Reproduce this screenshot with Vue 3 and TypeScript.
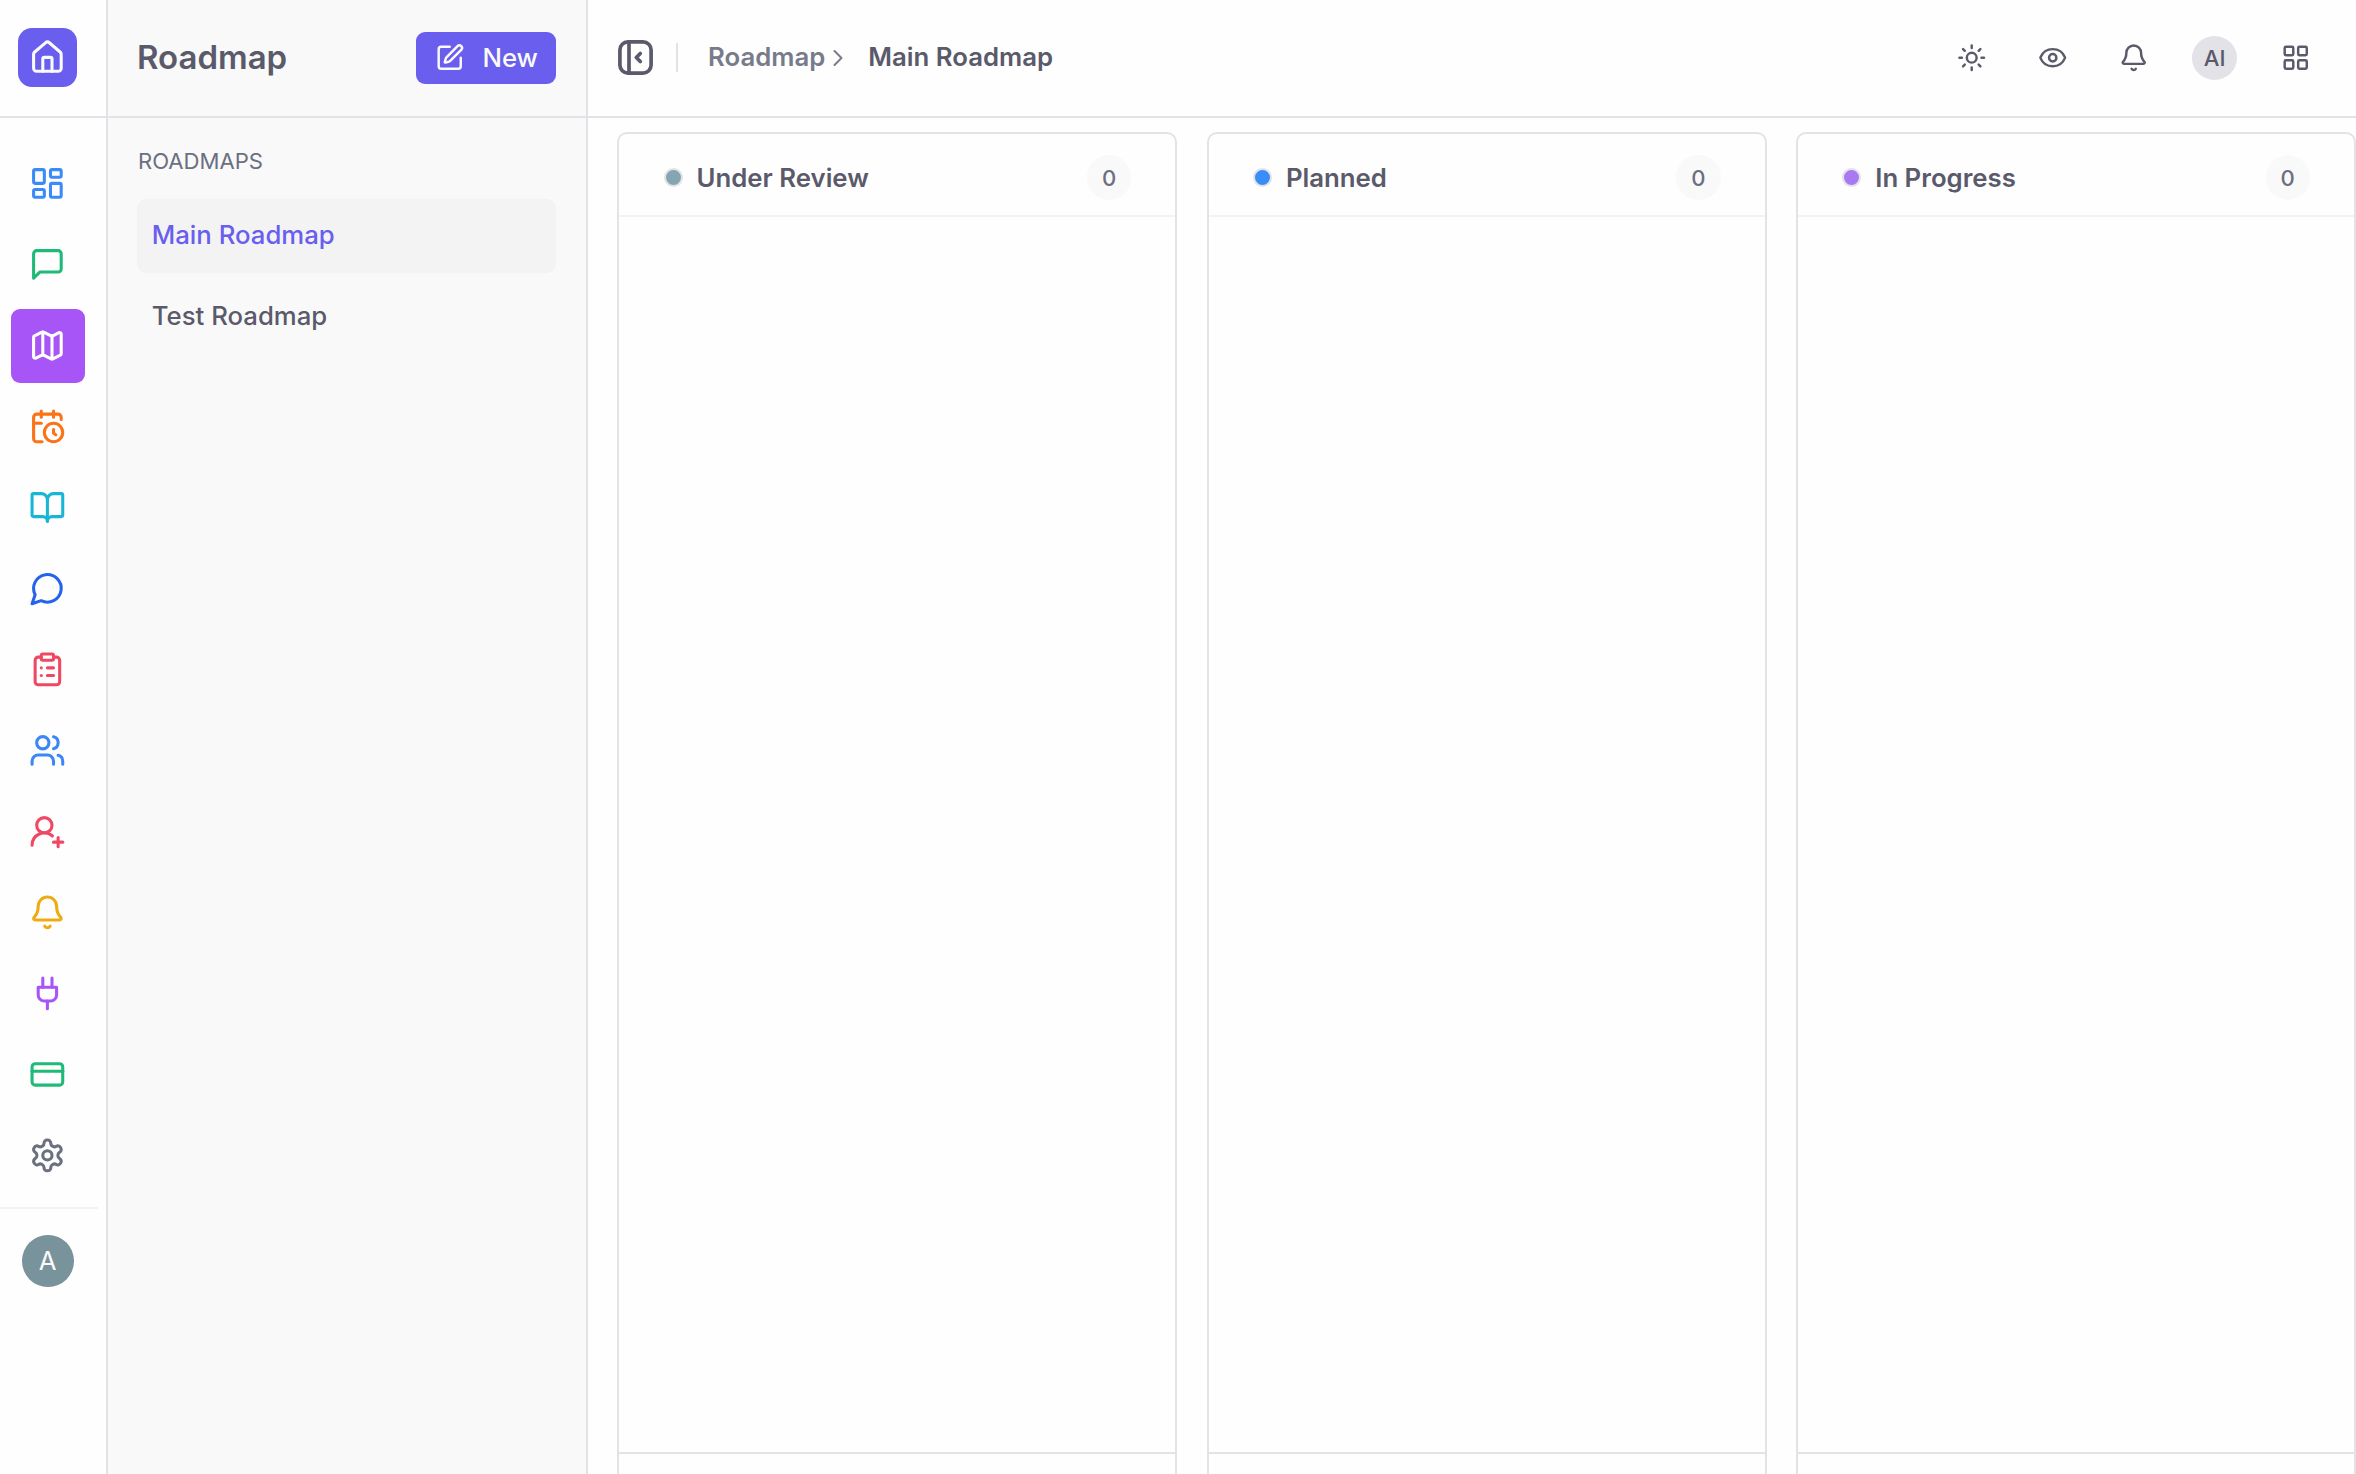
<script setup lang="ts">
interface NavItem {
  name: string
  color: string
  paths: string[]
  active?: boolean
}

const bell = [
  'M10.268 21a2 2 0 0 0 3.464 0',
  'M3.262 15.326A1 1 0 0 0 4 17h16a1 1 0 0 0 .74-1.673C19.41 13.956 18 12.499 18 8A6 6 0 0 0 6 8c0 4.499-1.411 5.956-2.738 7.326',
]

const nav: NavItem[] = [
  { name: 'dashboard', color: '#3b8af6', paths: ['M4 3h5a1 1 0 0 1 1 1v7a1 1 0 0 1-1 1H4a1 1 0 0 1-1-1V4a1 1 0 0 1 1-1z', 'M15 3h5a1 1 0 0 1 1 1v3a1 1 0 0 1-1 1h-5a1 1 0 0 1-1-1V4a1 1 0 0 1 1-1z', 'M15 12h5a1 1 0 0 1 1 1v7a1 1 0 0 1-1 1h-5a1 1 0 0 1-1-1v-7a1 1 0 0 1 1-1z', 'M4 16h5a1 1 0 0 1 1 1v3a1 1 0 0 1-1 1H4a1 1 0 0 1-1-1v-3a1 1 0 0 1 1-1z'] },
  { name: 'feedback', color: '#1fb978', paths: ['M21 15a2 2 0 0 1-2 2H7l-4 4V5a2 2 0 0 1 2-2h14a2 2 0 0 1 2 2z'] },
  { name: 'roadmap', color: '#ffffff', active: true, paths: ['M14.106 5.553a2 2 0 0 0 1.788 0l3.659-1.83A1 1 0 0 1 21 4.619v12.764a1 1 0 0 1-.553.894l-4.553 2.277a2 2 0 0 1-1.788 0l-4.212-2.106a2 2 0 0 0-1.788 0l-3.659 1.83A1 1 0 0 1 3 19.381V6.618a1 1 0 0 1 .553-.894l4.553-2.277a2 2 0 0 1 1.788 0z', 'M15 5.764v15', 'M9 3.236v15'] },
  { name: 'schedule', color: '#fb7316', paths: ['M21 7.5V6a2 2 0 0 0-2-2H5a2 2 0 0 0-2 2v14a2 2 0 0 0 2 2h3.5', 'M16 2v4', 'M8 2v4', 'M3 10h5', 'M17.5 17.5 16 16.3V14', 'M22 16a6 6 0 1 1-12 0 6 6 0 0 1 12 0z'] },
  { name: 'knowledge', color: '#18b6d6', paths: ['M12 7v14', 'M3 18a1 1 0 0 1-1-1V4a1 1 0 0 1 1-1h5a4 4 0 0 1 4 4 4 4 0 0 1 4-4h5a1 1 0 0 1 1 1v13a1 1 0 0 1-1 1h-6a3 3 0 0 0-3 3 3 3 0 0 0-3-3z'] },
  { name: 'chat', color: '#2563eb', paths: ['M7.9 20A9 9 0 1 0 4 16.1L2 22Z'] },
  { name: 'surveys', color: '#f04763', paths: ['M9 2h6a1 1 0 0 1 1 1v2a1 1 0 0 1-1 1H9a1 1 0 0 1-1-1V3a1 1 0 0 1 1-1z', 'M16 4h2a2 2 0 0 1 2 2v14a2 2 0 0 1-2 2H6a2 2 0 0 1-2-2V6a2 2 0 0 1 2-2h2', 'M12 11h4', 'M12 16h4', 'M8 11h.01', 'M8 16h.01'] },
  { name: 'users', color: '#3b86f8', paths: ['M16 21v-2a4 4 0 0 0-4-4H6a4 4 0 0 0-4 4v2', 'M13 7a4 4 0 1 1-8 0 4 4 0 0 1 8 0z', 'M22 21v-2a4 4 0 0 0-3-3.87', 'M16 3.13a4 4 0 0 1 0 7.75'] },
  { name: 'invite', color: '#f04763', paths: ['M2 21a8 8 0 0 1 13.292-6', 'M15 8a5 5 0 1 1-10 0 5 5 0 0 1 10 0z', 'M19 16v6', 'M22 19h-6'] },
  { name: 'alerts', color: '#eeab12', paths: bell },
  { name: 'integrations', color: '#a855f7', paths: ['M12 22v-5', 'M9 8V2', 'M15 8V2', 'M18 8v5a4 4 0 0 1-4 4h-4a4 4 0 0 1-4-4V8Z'] },
  { name: 'billing', color: '#1fb978', paths: ['M4 5h16a2 2 0 0 1 2 2v10a2 2 0 0 1-2 2H4a2 2 0 0 1-2-2V7a2 2 0 0 1 2-2z', 'M2 10h20'] },
  { name: 'settings', color: '#6b6f7f', paths: ['M12.22 2h-.44a2 2 0 0 0-2 2v.18a2 2 0 0 1-1 1.73l-.43.25a2 2 0 0 1-2 0l-.15-.08a2 2 0 0 0-2.73.73l-.22.38a2 2 0 0 0 .73 2.73l.15.1a2 2 0 0 1 1 1.72v.51a2 2 0 0 1-1 1.74l-.15.09a2 2 0 0 0-.73 2.73l.22.38a2 2 0 0 0 2.73.73l.15-.08a2 2 0 0 1 2 0l.43.25a2 2 0 0 1 1 1.73V20a2 2 0 0 0 2 2h.44a2 2 0 0 0 2-2v-.18a2 2 0 0 1 1-1.73l.43-.25a2 2 0 0 1 2 0l.15.08a2 2 0 0 0 2.73-.73l.22-.39a2 2 0 0 0-.73-2.73l-.15-.08a2 2 0 0 1-1-1.74v-.5a2 2 0 0 1 1-1.74l.15-.09a2 2 0 0 0 .73-2.73l-.22-.38a2 2 0 0 0-2.73-.73l-.15.08a2 2 0 0 1-2 0l-.43-.25a2 2 0 0 1-1-1.73V4a2 2 0 0 0-2-2z', 'M15 12a3 3 0 1 1-6 0 3 3 0 0 1 6 0z'] },
]

const roadmaps = [
  { name: 'Main Roadmap', active: true },
  { name: 'Test Roadmap', active: false },
]

const columns = [
  { name: 'Under Review', color: '#84a6b0', count: 0 },
  { name: 'Planned', color: '#388df6', count: 0 },
  { name: 'In Progress', color: '#a979f2', count: 0 },
]
</script>

<template>
  <div class="app">
    <aside class="rail">
      <div class="rail-head">
        <div class="logo">
          <svg class="icon" viewBox="0 0 24 24">
            <path d="M15 21v-8a1 1 0 0 0-1-1h-4a1 1 0 0 0-1 1v8" />
            <path d="M3 10a2 2 0 0 1 .709-1.528l7-5.999a2 2 0 0 1 2.582 0l7 5.999A2 2 0 0 1 21 10v9a2 2 0 0 1-2 2H5a2 2 0 0 1-2-2z" />
          </svg>
        </div>
      </div>
      <nav class="rail-nav">
        <a v-for="item in nav" :key="item.name" class="rail-item" :class="{ active: item.active }" :style="{ color: item.color }">
          <svg class="icon" viewBox="0 0 24 24"><path v-for="d in item.paths" :key="d" :d="d" /></svg>
        </a>
      </nav>
      <div class="rail-foot"><div class="avatar">A</div></div>
    </aside>

    <aside class="panel">
      <div class="panel-head">
        <h1>Roadmap</h1>
        <button class="new">
          <svg class="icon small" viewBox="0 0 24 24">
            <path d="M12 3H5a2 2 0 0 0-2 2v14a2 2 0 0 0 2 2h14a2 2 0 0 0 2-2v-7" />
            <path d="M18.375 2.625a1 1 0 0 1 3 3l-9.013 9.014a2 2 0 0 1-.853.505l-2.873.84a.5.5 0 0 1-.62-.62l.84-2.873a2 2 0 0 1 .506-.852z" />
          </svg>
          <span>New</span>
        </button>
      </div>
      <div class="panel-body">
        <div class="label">ROADMAPS</div>
        <a v-for="r in roadmaps" :key="r.name" class="map-link" :class="{ active: r.active }">{{ r.name }}</a>
      </div>
    </aside>

    <main class="main">
      <header class="top">
        <svg class="toggle" viewBox="0 0 35 35">
          <rect x="1.9" y="1.9" width="31.2" height="31.2" rx="8" />
          <path d="M11 2v31" />
          <path d="M22.3 13.5 18.3 17.5l4 4" />
        </svg>
        <span class="sep"></span>
        <span class="crumb">Roadmap</span>
        <svg class="chev" viewBox="0 0 10 18"><path d="M1.5 2 8.5 9l-7 7" /></svg>
        <span class="crumb current">Main Roadmap</span>
        <div class="actions">
          <span class="action">
            <svg class="icon small" viewBox="0 0 24 24">
              <circle cx="12" cy="12" r="4" />
              <path d="M12 2v2M12 20v2M4.93 4.93l1.41 1.41M17.66 17.66l1.41 1.41M2 12h2M20 12h2M6.34 17.66l-1.41 1.41M19.07 4.93l-1.41 1.41" />
            </svg>
          </span>
          <span class="action">
            <svg class="icon small" viewBox="0 0 24 24">
              <path d="M2.062 12.348a1 1 0 0 1 0-.696 10.75 10.75 0 0 1 19.876 0 1 1 0 0 1 0 .696 10.75 10.75 0 0 1-19.876 0" />
              <circle cx="12" cy="12" r="3" />
            </svg>
          </span>
          <span class="action">
            <svg class="icon small" viewBox="0 0 24 24"><path v-for="d in bell" :key="d" :d="d" /></svg>
          </span>
          <span class="action"><span class="ai">AI</span></span>
          <span class="action">
            <svg class="icon small" viewBox="0 0 24 24">
              <rect x="3" y="3" width="7" height="7" rx="1" /><rect x="14" y="3" width="7" height="7" rx="1" />
              <rect x="14" y="14" width="7" height="7" rx="1" /><rect x="3" y="14" width="7" height="7" rx="1" />
            </svg>
          </span>
        </div>
      </header>
      <div class="board">
        <section v-for="c in columns" :key="c.name" class="column">
          <div class="column-head">
            <span class="dot" :style="{ backgroundColor: c.color }"></span>
            <h2>{{ c.name }}</h2>
            <span class="count">{{ c.count }}</span>
          </div>
          <div class="column-body"></div>
          <div class="column-foot"></div>
        </section>
      </div>
    </main>
  </div>
</template>

<style>
html {
  font-size: 29.44px;
}
body {
  margin: 0;
  overflow: hidden;
}
</style>

<style scoped>
.app,
.app * {
  box-sizing: border-box;
}
.app {
  display: flex;
  width: 100vw;
  height: 100vh;
  overflow: hidden;
  background: #fefefe;
  color: #5a5a6b;
  font-family: Inter, sans-serif;
}
h1,
h2 {
  margin: 0;
  font-weight: 600;
}
.icon {
  display: block;
  width: 1.25rem;
  height: 1.25rem;
  flex: none;
}
.icon.small {
  width: 1rem;
  height: 1rem;
}
svg {
  fill: none;
  stroke: currentColor;
  stroke-width: 2;
  stroke-linecap: round;
  stroke-linejoin: round;
}
.rail {
  flex: none;
  width: 108px;
  border-right: 2px solid #e2e2e7;
}
.rail-head,
.panel-head,
.top {
  display: flex;
  align-items: center;
  height: 118px;
  border-bottom: 2px solid #e2e2e7;
}
.rail-head {
  padding: 0 0 1px 18px;
}
.logo {
  display: flex;
  align-items: center;
  justify-content: center;
  width: 2rem;
  height: 2rem;
  border-radius: 14px;
  background: #695eee;
  color: #fafafa;
}
.rail-nav {
  display: flex;
  flex-direction: column;
  gap: 0.25rem;
  padding: 29px 0 15px 11px;
}
.rail-item {
  display: flex;
  align-items: center;
  justify-content: center;
  width: 2.5rem;
  height: 2.5rem;
  border-radius: 9px;
}
.rail-item.active {
  background: #a855f7;
}
.rail-foot {
  width: 98px;
  border-top: 2px solid #f3f3f5;
  padding: 26px 0 0 22px;
}
.avatar {
  display: flex;
  align-items: center;
  justify-content: center;
  width: 1.75rem;
  height: 1.75rem;
  border-radius: 50%;
  background: #78939b;
  color: #fafafa;
  font-size: 0.875rem;
}
.panel {
  flex: none;
  width: 480px;
  border-right: 2px solid #e2e2e7;
  background: #f9f9f9;
}
.panel-head {
  justify-content: space-between;
  padding: 0 30px 0 29px;
}
h1 {
  padding-bottom: 2px;
  font-size: 1.12rem;
}
.new {
  display: flex;
  align-items: center;
  width: 140px;
  height: 52px;
  padding: 0 0 0 19px;
  gap: 18px;
  border: 0;
  border-radius: 9px;
  background: #695eee;
  color: #fafafa;
  font: 500 0.875rem Inter, sans-serif;
}
.new span {
  padding-bottom: 2px;
}
.panel-body {
  display: flex;
  flex-direction: column;
  gap: 0.25rem;
  padding: 28px 30px 0 29px;
}
.label {
  height: 46px;
  padding-left: 1px;
  font-size: 0.75rem;
  line-height: 30px;
  color: #6b6f7f;
}
.map-link {
  display: flex;
  align-items: center;
  height: 2.5rem;
  padding: 0 0 3px 0.5rem;
  border-radius: 9px;
  font-size: 0.875rem;
  font-weight: 500;
}
.map-link.active {
  background: #f3f3f4;
  color: #695eee;
}
.main {
  display: flex;
  flex: 1;
  flex-direction: column;
  min-width: 0;
}
.top {
  flex: none;
  padding: 0 31px 1px 30px;
}
.toggle {
  width: 35px;
  height: 35px;
  stroke-width: 3.7;
}
.sep {
  width: 2px;
  height: 1rem;
  margin: 0 30px 0 23px;
  background: #e2e2e7;
}
.crumb {
  padding-bottom: 2px;
  font-size: 0.875rem;
  font-weight: 600;
  color: #777b8a;
}
.chev {
  width: 10px;
  height: 18px;
  margin: 0 25px 0 8px;
  color: #777b8a;
}
.crumb.current {
  color: #5a5a6b;
}
.actions {
  display: flex;
  gap: 0.75rem;
  margin-left: auto;
}
.action {
  display: flex;
  align-items: center;
  justify-content: center;
  width: 2rem;
  height: 2rem;
}
.ai {
  display: flex;
  align-items: center;
  justify-content: center;
  width: 45px;
  height: 44px;
  border-radius: 50%;
  background: #e2e2e7;
  font-size: 0.75rem;
  font-weight: 500;
}
.board {
  display: flex;
  flex: 1;
  gap: 1rem;
  min-height: 0;
  padding: 14px 0 0 1rem;
}
.column {
  display: flex;
  flex: none;
  flex-direction: column;
  width: 559.9px;
  border: 2px solid #e2e2e7;
  border-bottom: 0;
  border-radius: 10px 10px 0 0;
}
.column-head {
  display: flex;
  align-items: center;
  height: 83px;
  padding: 6px 1.5rem 0;
  border-bottom: 2px solid #f3f3f5;
}
.dot {
  width: 19px;
  height: 19px;
  margin-right: 14px;
  border: 2px solid #e2e2e7;
  border-radius: 50%;
}
h2 {
  font-size: 0.875rem;
}
.count {
  display: flex;
  align-items: center;
  justify-content: center;
  width: 1.5rem;
  height: 1.5rem;
  margin-left: auto;
  border-radius: 50%;
  background: #f9f9f9;
  color: #6b6f7f;
  font-size: 0.75rem;
  font-weight: 500;
}
.column-body {
  flex: 1;
}
.column-foot {
  height: 22px;
  border-top: 2px solid #e2e2e7;
}
</style>
